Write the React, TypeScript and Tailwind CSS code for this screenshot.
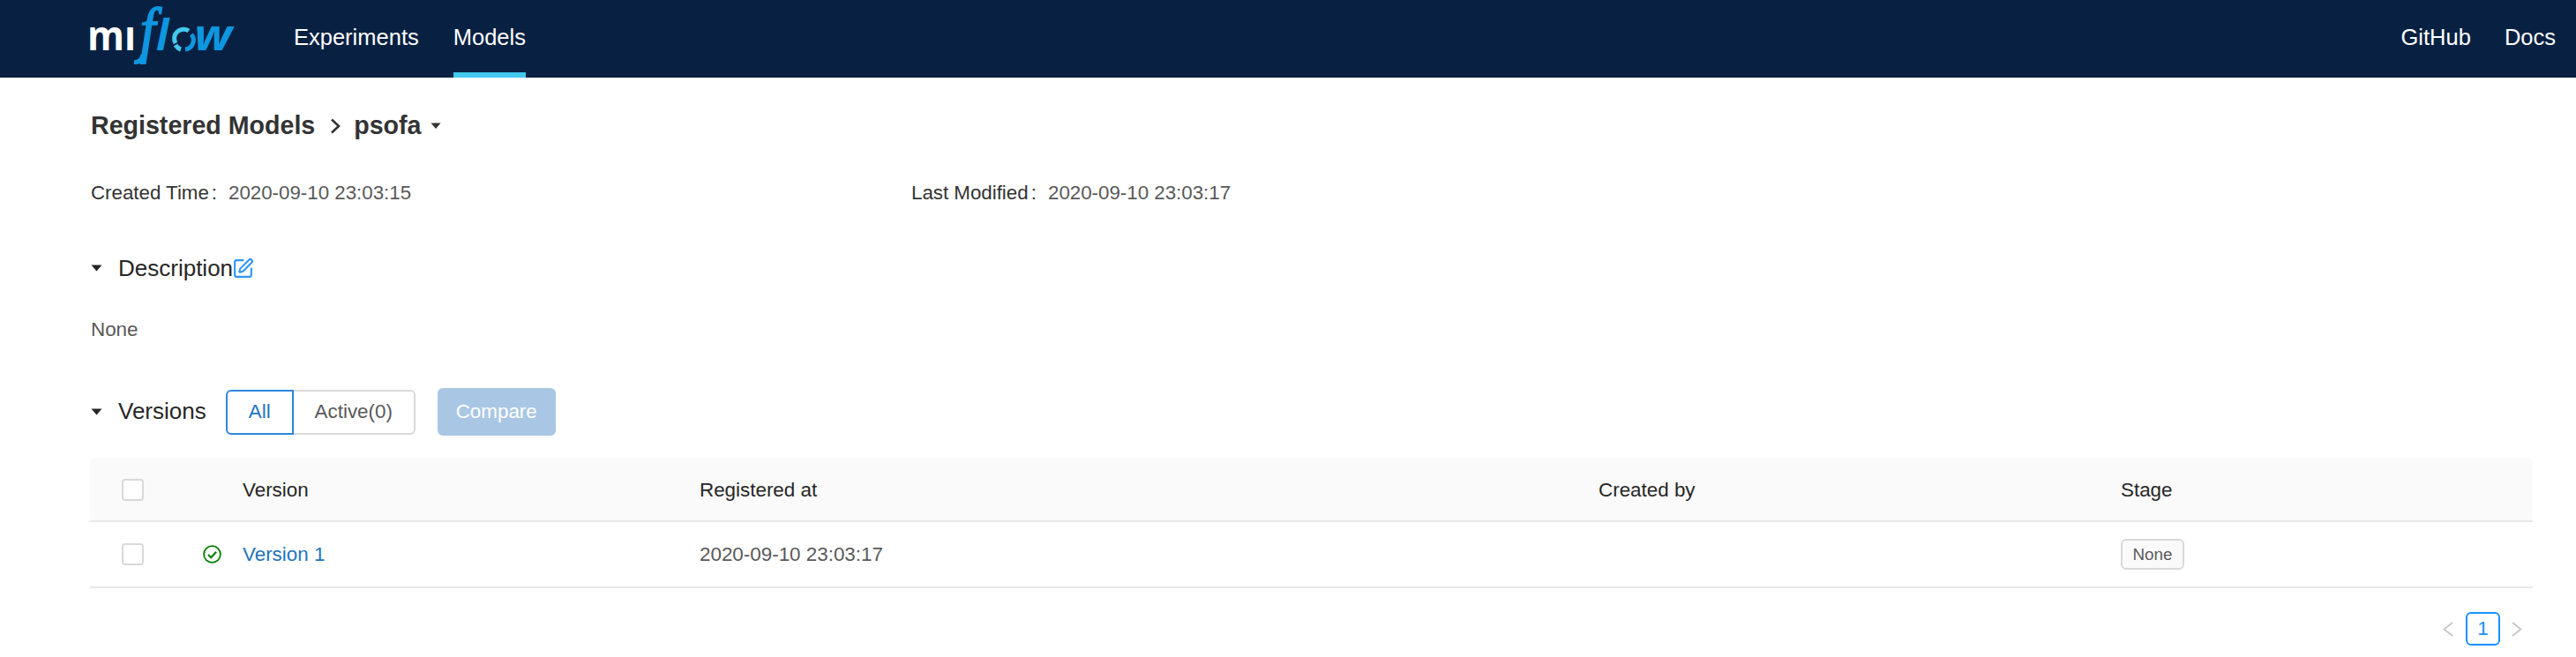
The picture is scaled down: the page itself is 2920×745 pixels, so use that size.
import { SquarePen } from 'lucide-react';

function Logo() {
  return (
    <svg width="170" height="72" viewBox="0 0 170 72" className="block overflow-visible" aria-label="mlflow">
      <defs>
        <clipPath id="ml-clip">
          <rect x="-4" y="23" width="62" height="30" />
        </clipPath>
      </defs>
      <text x="-3" y="49" clipPath="url(#ml-clip)" fill="#ffffff" fontFamily="'Open Sans', sans-serif" fontWeight="700" fontSize="46" textLength="55" lengthAdjust="spacingAndGlyphs">ml</text>
      <text transform="translate(57 49) scale(0.85 0.95)" stroke="#0f96e0" strokeWidth="2" fill="#0f96e0" fontFamily="'Liberation Serif', serif" fontStyle="italic" fontSize="73">f</text>
      <path d="M60 54C59 60 56 63 50 62.5" fill="none" stroke="#0f96e0" strokeWidth="5" />
      <text x="75" y="49" fill="#0f96e0" fontFamily="'Open Sans', sans-serif" fontStyle="italic" fontWeight="700" fontSize="48">l</text>
      <path d="M97 41a10.5 10.5 0 0 1 15-14" fill="none" stroke="#43c9ed" strokeWidth="5" />
      <path d="M97 43a10.5 10.5 0 0 0 6 5" fill="none" stroke="#43c9ed" strokeWidth="5" />
      <path d="M115 31a10.5 10.5 0 0 1-7 17" fill="none" stroke="#0f96e0" strokeWidth="5" />
      <text x="118" y="49" fill="#0f96e0" fontFamily="'Open Sans', sans-serif" fontStyle="italic" fontWeight="700" fontSize="48" textLength="43" lengthAdjust="spacingAndGlyphs">w</text>
    </svg>
  );
}

function Caret({ className }: { className: string }) {
  return (
    <svg viewBox="0 0 13 8" className={className}>
      <path d="M0.5 0.5h12L6.5 7.5z" fill="currentColor" />
    </svg>
  );
}

function Checkbox() {
  return <span className="block h-[25px] w-[25px] rounded-[4px] border-2 border-[#d9d9d9] bg-white" />;
}

function Angle({ dir, className }: { dir: 'left' | 'right'; className: string }) {
  return (
    <svg viewBox="0 0 12 17" className={className} fill="none" stroke="#c4c4c4" strokeWidth="1.7">
      <path d={dir === 'left' ? 'M11 1L1.5 8.5 11 16' : 'M1 1l9.5 7.5L1 16'} />
    </svg>
  );
}

export default function App() {
  return (
    <div className="min-h-[745px] bg-white font-['Liberation_Sans',Arial,sans-serif] text-[#595959]">
      <header className="flex h-[88px] items-center justify-between bg-[#082142] pl-[102px] pr-[23px] text-white">
        <div className="flex h-full items-center">
          <Logo />
          <nav className="ml-[61px] flex h-full gap-[39px] text-[25.5px]">
            <a className="flex items-center pb-[3px]">Experiments</a>
            <a className="flex items-center border-b-[6px] border-[#43c9ed] pt-[3px]">Models</a>
          </nav>
        </div>
        <div className="flex gap-[38px] pb-[3px] text-[25.5px]">
          <a>GitHub</a>
          <a>Docs</a>
        </div>
      </header>

      <main className="pl-[103px] pr-[49px]">
        <div className="flex h-[106px] items-center pt-[2px] text-[28.6px] font-bold text-[#333333]">
          <span>Registered Models</span>
          <svg viewBox="0 0 13 18" className="ml-[17px] mr-[14px] mt-[2px] h-[18px] w-[13px]" fill="none" stroke="#333333" strokeWidth="2.6">
            <path d="M2 1.5l8 7.5-8 7.5" />
          </svg>
          <span>psofa</span>
          <Caret className="ml-[10px] mt-[2px] w-[12px] text-[#333333]" />
        </div>

        <div className="flex h-[48px] items-center pt-[2px] text-[22.3px]">
          <div className="flex w-[930px] items-center">
            <span className="flex w-[156px] gap-[3px] text-[#333333]"><span>Created Time</span><span>:</span></span>
            <span>2020-09-10 23:03:15</span>
          </div>
          <div className="flex items-center">
            <span className="flex w-[155px] gap-[3px] text-[#333333]"><span>Last Modified</span><span>:</span></span>
            <span>2020-09-10 23:03:17</span>
          </div>
        </div>

        <div className="mt-8 flex h-[60px] items-center text-[26px] text-[#262626]">
          <Caret className="mr-[18px] w-[13px] text-[#262626]" />
          <span>Description</span>
          <SquarePen className="-ml-px h-[25px] w-[25px] text-[#2f95f5]" strokeWidth={2} />
        </div>

        <div className="mt-5 flex h-10 items-center text-[22.4px]">None</div>

        <div className="mt-[46px] flex h-[54px] items-center">
          <Caret className="mr-[18px] w-[13px] text-[#262626]" />
          <span className="pb-[2px] text-[26px] text-[#262626]">Versions</span>
          <div className="ml-[22px] flex h-[51px] text-[22.4px]">
            <button className="w-[77px] rounded-l-[6px] border-2 border-[#2e86de] text-[#2374bb]">All</button>
            <button className="w-[138px] rounded-r-[6px] border-2 border-l-0 border-[#d9d9d9]">Active(0)</button>
          </div>
          <button className="ml-[25px] h-[54px] w-[134px] rounded-[6px] bg-[#a9c7e4] text-[22.4px] text-white">Compare</button>
        </div>

        <div className="mt-[25px] -ml-px text-[22.4px]">
          <div className="grid h-[73px] grid-cols-[173px_518px_1019px_592px_1fr] items-center rounded-t-[7px] border-b-2 border-[#e8e8e8] bg-[#fafafa] pt-[2px] text-[#262626]">
            <div className="pl-9"><Checkbox /></div>
            <div>Version</div>
            <div>Registered at</div>
            <div>Created by</div>
            <div>Stage</div>
          </div>
          <div className="grid h-[75px] grid-cols-[173px_518px_1019px_592px_1fr] items-center border-b-2 border-[#e8e8e8]">
            <div className="flex items-center justify-between pl-9 pr-[24px]">
              <Checkbox />
              <svg viewBox="0 0 21 21" className="h-[21px] w-[21px]" fill="none" stroke="#008000" strokeWidth="1.8">
                <circle cx="10.5" cy="10.5" r="9.4" />
                <path d="M6 11l3.2 3.2 6-6.4" strokeWidth="2.2" />
              </svg>
            </div>
            <a className="text-[#2374bb]">Version 1</a>
            <div>2020-09-10 23:03:17</div>
            <div />
            <div>
              <span className="inline-flex h-[35px] w-[72px] items-center justify-center rounded-[6px] border-2 border-[#d9d9d9] bg-[#fafafa] text-[18.8px]">None</span>
            </div>
          </div>
        </div>

        <div className="mt-[27px] flex items-center justify-end pr-[12px]">
          <Angle dir="left" className="mr-[14px] h-[17px] w-[12px]" />
          <span className="flex h-[38px] w-[39px] items-center justify-center rounded-[6px] border-2 border-[#1890ff] text-[22.4px] text-[#1890ff]">1</span>
          <Angle dir="right" className="ml-[13px] h-[17px] w-[12px]" />
        </div>
      </main>
    </div>
  );
}
